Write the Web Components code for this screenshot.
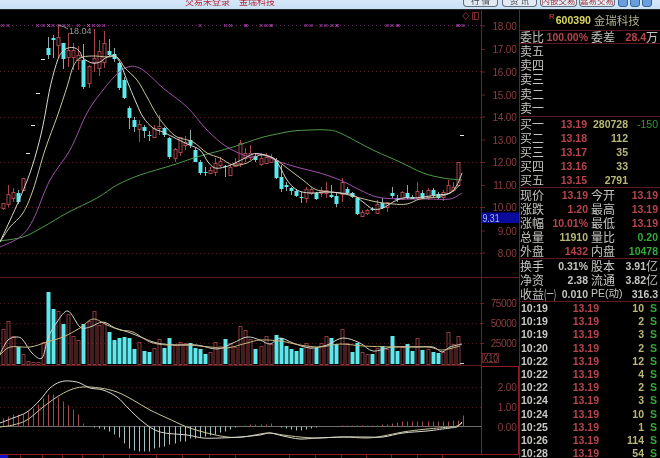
<!DOCTYPE html>
<html lang="zh">
<head>
<meta charset="utf-8">
<title>金瑞科技 K线</title>
<style>
  html, body { margin: 0; height: 100%; background: #000; overflow: hidden; }
</style>
</head>
<body>
<terminal-view>
  <top-bar slot="top"></top-bar>
  <kline-chart slot="chart"></kline-chart>
  <quote-panel slot="side">
    <quote-section h="20"><stock-title code="600390">金瑞科技</stock-title></quote-section>
    <quote-section h="12">
      <quote-row label="委比" value="100.00%" tone="red" label2="委差" value2="28.4" tone2="red" unit2="万"></quote-row>
    </quote-section>
    <quote-section h="72" rows="5">
      <book-row label="卖五"></book-row>
      <book-row label="卖四"></book-row>
      <book-row label="卖三"></book-row>
      <book-row label="卖二"></book-row>
      <book-row label="卖一"></book-row>
    </quote-section>
    <quote-section h="70" rows="5">
      <book-row label="买一" price="13.19" vol="280728" diff="-150"></book-row>
      <book-row label="买二" price="13.18" vol="112"></book-row>
      <book-row label="买三" price="13.17" vol="35"></book-row>
      <book-row label="买四" price="13.16" vol="33"></book-row>
      <book-row label="买五" price="13.15" vol="2791"></book-row>
    </quote-section>
    <quote-section h="70" rows="5">
      <quote-row label="现价" value="13.19" tone="red" label2="今开" value2="13.19" tone2="red"></quote-row>
      <quote-row label="涨跌" value="1.20" tone="red" label2="最高" value2="13.19" tone2="red"></quote-row>
      <quote-row label="涨幅" value="10.01%" tone="red" label2="最低" value2="13.19" tone2="red"></quote-row>
      <quote-row label="总量" value="11910" tone="yellow" label2="量比" value2="0.20" tone2="green"></quote-row>
      <quote-row label="外盘" value="1432" tone="red" label2="内盘" value2="10478" tone2="green"></quote-row>
    </quote-section>
    <quote-section h="42" rows="3">
      <quote-row label="换手" value="0.31%" tone="grey" label2="股本" value2="3.91" tone2="grey" unit2="亿"></quote-row>
      <quote-row label="净资" value="2.38" tone="grey" label2="流通" value2="3.82" tone2="grey" unit2="亿"></quote-row>
      <quote-row label="收益" suffix="(一)" value="0.010" tone="grey" label2="PE(动)" value2="316.3" tone2="grey"></quote-row>
    </quote-section>
    <quote-section h="160" rows="12" step="13.2">
      <trade-row time="10:19" price="13.19" vol="10"></trade-row>
      <trade-row time="10:19" price="13.19" vol="2"></trade-row>
      <trade-row time="10:19" price="13.19" vol="3"></trade-row>
      <trade-row time="10:20" price="13.19" vol="2"></trade-row>
      <trade-row time="10:22" price="13.19" vol="12"></trade-row>
      <trade-row time="10:22" price="13.19" vol="4"></trade-row>
      <trade-row time="10:22" price="13.19" vol="2"></trade-row>
      <trade-row time="10:24" price="13.19" vol="3"></trade-row>
      <trade-row time="10:24" price="13.19" vol="10"></trade-row>
      <trade-row time="10:25" price="13.19" vol="1"></trade-row>
      <trade-row time="10:26" price="13.19" vol="114"></trade-row>
      <trade-row time="10:28" price="13.19" vol="54"></trade-row>
    </quote-section>
  </quote-panel>
</terminal-view>

<script>
const TONES = { red: '#b8454c', yellow: '#b9b878', green: '#35a83a', grey: '#c4c4c0' };
const LINE = '#5e1a1e';
const CJK = '"Noto Sans CJK SC", "Liberation Sans", sans-serif';
const NUM = '"Liberation Sans", "Noto Sans CJK SC", sans-serif';

class TerminalView extends HTMLElement {
  constructor() {
    super();
    this.attachShadow({ mode: 'open' });
  }
  connectedCallback() {
    this.shadowRoot.innerHTML = `
      <style>
        :host { display: flex; flex-direction: column; width: 660px; height: 458px; background: #000; filter: blur(.4px); overflow: hidden; }
        #main { display: flex; flex: 1; min-height: 0; }
      </style>
      <slot name="top"></slot>
      <div id="main">
        <slot name="chart"></slot>
        <slot name="side"></slot>
      </div>`;
  }
}

class TopBar extends HTMLElement {
  constructor() {
    super();
    this.attachShadow({ mode: 'open' });
  }
  connectedCallback() {
    this.shadowRoot.innerHTML = `
      <style>
        :host { display: flex; height: 9px; flex-shrink: 0; overflow: hidden; background: linear-gradient(#d6e7f8, #c8e0f6); border-bottom: 1px solid #26282c; align-items: flex-end; font: 9px ${CJK}; }
        #title { margin-left: 185px; width: 278px; margin-bottom: 3px; color: #b8283a; font-size: 9px; line-height: 9px; white-space: nowrap; }
        #title span { margin-left: 9px; }
        #tabs { display: flex; align-items: flex-end; margin-bottom: 2px; }
        .tab { box-sizing: border-box; height: 10px; width: 35px; border: 1px solid #5f6f7f; border-top: 0; border-radius: 0 0 4px 4px; background: #e2ebf3; color: #4a4a50; text-align: center; line-height: 7px; font-size: 8.5px; white-space: nowrap; }
        .tab + .tab { margin-left: 4px; }
        .tab.wide { color: #a33a44; width: 37px; margin-left: 3px; }
        .tab.wide + .wide { width: 36px; margin-left: 2px; }
        #win { display: flex; gap: 2px; margin: 0 0 2px 3px; }
        #win i { display: block; width: 10px; height: 9px; background: #6a9ede; border: 1px solid #36639c; border-radius: 0 0 3px 3px; box-sizing: border-box; }
      </style>
      <div id="title">交易未登录<span>金瑞科技</span></div>
      <div id="tabs">
        <div class="tab">行 情</div>
        <div class="tab">资 讯</div>
        <div class="tab wide">内嵌交易</div>
        <div class="tab wide">嘉易交易</div>
      </div>
      <div id="win"><i></i><i></i><i></i></div>`;
  }
}

// x of candle number i on the price canvas
const cx = i => 2.5 + 5.06 * i;

// [bodyTop, bodyBottom, wickTop, wickBottom, cyan?]
const CANDLES = [
  [203,208,203,210,0],[194,204,185,207,0],[192,198,188,202,0],[193,202,190,204,1],[178,190,178,190,0],
  [153,154,153,154,2],[125,126,125,126,2],[93,94,93,94,2],[59,60,59,60,2],
  [48,55,37,59,1],[38,40,35,58,1],[37,45,25,58,0],[43,59,43,69,1],[50,57,33,67,0],[50,57,43,70,0],
  [55,60,46,70,0],[60,87,44,89,1],[66,83,65,88,0],[58,62,29,72,0],[51,68,40,76,0],[43,62,31,68,0],
  [51,55,39,56,1],[54,59,48,62,1],[63,88,62,90,1],[80,98,77,99,1],[108,118,106,129,1],[120,127,117,132,1],
  [124,129,120,142,0],[127,131,125,138,1],[135,136,131,141,1],[128,137,125,137,0],[126,128,115,135,0],
  [128,135,127,137,1],[138,157,137,159,1],[149,158,148,162,0],[137,152,137,156,0],[142,145,136,150,0],
  [140,145,130,148,1],[150,162,148,162,1],[162,173,160,175,1],[172,173,167,176,1],[170,173,167,174,0],
  [163,172,158,176,0],[161,165,157,167,0],[166,167,165,177,1],[167,175,165,176,0],[163,166,158,167,0],
  [143,163,140,167,0],[153,158,148,162,0],[153,157,145,160,0],[156,160,153,162,1],[158,164,153,166,0],
  [157,163,153,164,0],[157,162,154,163,0],[160,178,158,179,1],[177,189,165,192,1],[185,187,182,191,1],
  [188,191,187,195,1],[191,196,189,197,1],[197,198,192,203,1],[189,198,187,203,0],[189,193,187,195,0],
  [193,199,192,200,1],[190,193,187,197,0],[190,193,182,198,0],[195,197,185,198,1],[196,204,193,207,1],
  [182,194,178,202,0],[189,193,187,195,1],[193,197,192,198,1],[198,214,197,215,1],[212,216,210,217,0],
  [210,213,209,215,0],[209,210,207,211,1],[204,213,200,214,0],[203,208,198,209,1],[202,207,202,212,0],
  [193,196,187,198,1],[198,200,195,202,1],[192,199,191,200,0],[193,198,185,199,1],[197,199,195,199,1],
  [191,198,182,200,0],[193,198,190,199,1],[190,197,188,200,0],[190,195,188,197,1],[194,198,192,199,1],
  [192,197,190,201,0],[185,193,180,194,0],[187,190,182,192,0],[162,185,162,185,0]
];

const VOLS = [
  [329,0],[321,0],[336,0],[347,1],[354,0],[361,0],[362,0],[362,0],[342,0],[292,1],[309,1],[311,0],[324,1],[314,0],
  [336,0],[340,0],[324,1],[321,0],[311,0],[325,0],[323,0],[332,1],[340,1],[338,1],[337,1],[338,1],[349,1],[342,0],
  [351,1],[352,1],[348,0],[339,0],[348,1],[338,1],[345,0],[342,0],[343,0],[343,1],[348,1],[349,1],[354,1],[352,0],
  [342,0],[346,0],[339,1],[343,0],[347,0],[326,0],[330,0],[339,0],[349,1],[346,0],[336,0],[344,0],[335,1],[338,1],
  [346,1],[349,1],[351,1],[348,1],[343,0],[348,0],[348,1],[343,0],[336,0],[338,1],[344,1],[329,0],[343,0],[352,1],
  [343,1],[352,0],[354,0],[354,1],[348,0],[346,1],[349,0],[336,1],[351,1],[347,0],[344,1],[351,1],[338,0],[350,1],
  [349,0],[352,1],[353,1],[352,0],[332,0],[344,0],[336,0]
];

const MACD = [8,10,12,12,12,15,18,22,28,32,32,29,25,21,17,12,3,0,-1,-2,-3,-5,-8,-11,-17,-22,-24,-25,-25,-25,-22,-21,-20,-18,-17,-15,-15,-12,-12,-11,-10,-9,-8,-6,-5,-3,-1,0,1,2,2,2,2,3,0,-1,-2,-3,-4,-4,-3,-2,-1,0,0,0,0,1,1,1,1,1,1,1,1,2,2,3,4,5,5,5,5,5,5,5,5,5,5,6,6,11];

const MA5 = [[0,242],[20,198],[32,167],[42,130],[50,88],[57,62],[62,52],[68,48],[75,48],[80,52],[83,58],[92,63],[100,62],[107,57],[115,56],[120,63],[128,83],[135,100],[143,117],[153,128],[163,132],[173,137],[187,144],[200,150],[208,162],[215,168],[225,167],[235,163],[245,158],[253,154],[260,154],[273,158],[280,167],[287,180],[297,190],[310,193],[327,192],[340,193],[353,195],[363,202],[373,209],[383,208],[393,202],[403,198],[413,198],[423,197],[437,195],[450,193],[457,185],[462,173]];
const MA10 = [[0,242],[10,227],[23,213],[33,190],[45,150],[57,117],[67,87],[73,67],[80,58],[92,56],[107,57],[117,57],[125,68],[137,80],[147,97],[157,115],[167,128],[177,137],[193,142],[207,153],[220,158],[233,165],[247,163],[260,155],[273,158],[287,168],[303,180],[317,190],[340,193],[360,198],[377,202],[393,204],[407,204],[420,199],[437,197],[450,193],[460,185]];
const MA20 = [[0,247],[20,237],[33,220],[50,180],[70,150],[87,113],[103,90],[118,73],[128,67],[137,67],[147,73],[163,88],[187,107],[207,130],[227,147],[250,157],[260,154],[280,162],[300,168],[320,173],[340,180],[360,190],[377,197],[400,199],[427,199],[450,199],[462,193]];
const MA60 = [[0,241],[23,237],[43,227],[67,213],[97,198],[117,185],[140,175],[173,165],[197,157],[233,147],[260,138],[277,134],[293,131],[310,130],[327,130],[340,133],[373,150],[400,162],[423,173],[443,178],[462,180]];
const VOL_A = [[0,354],[8,340],[17,337],[23,340],[32,353],[42,358],[48,338],[57,322],[68,311],[80,327],[90,327],[103,322],[115,328],[128,332],[143,338],[157,343],[177,345],[197,345],[217,349],[233,343],[247,337],[260,340],[270,344],[280,338],[293,343],[310,348],[327,345],[343,338],[360,343],[373,351],[393,347],[417,347],[433,347],[442,352],[450,347],[462,344]];
const VOL_B = [[0,355],[10,347],[30,347],[47,342],[63,337],[80,328],[93,319],[107,325],[120,330],[133,332],[150,342],[167,345],[187,345],[210,347],[227,348],[247,343],[260,340],[280,341],[300,345],[320,347],[340,344],[363,346],[393,347],[427,347],[442,350],[460,346]];
const DIF = [[0,423],[13,418],[27,412],[40,400],[50,388],[60,382],[70,381],[80,383],[90,388],[103,390],[117,397],[128,408],[143,422],[160,432],[187,435],[203,438],[220,438],[240,437],[260,435],[270,433],[283,436],[300,439],[317,438],[343,437],[367,437],[383,437],[403,433],[427,431],[450,428],[457,427],[462,422]];
const DEA = [[0,427],[13,425],[27,420],[43,407],[57,397],[70,390],[83,387],[100,388],[117,392],[133,400],[150,410],[167,418],[187,427],[207,433],[227,437],[243,437],[260,434],[270,433],[283,435],[300,437],[317,438],[343,437],[367,438],[383,436],[403,432],[427,429],[450,427],[457,426],[462,423]];

const MARKS = [2.7,8,37.7,43,48.7,53,59,64,68.7,78.3,88.7,93.7,98.7,103.7,200,225.7,230.7,246,261,266,271,306,311,321,326,332,337,387,392,398,458,463];
const BRIGHT = [48.7,88.7,246,271,337,398,458];

// catmull-rom through the read-off points
function smooth(pts) {
  let d = `M${pts[0][0]} ${pts[0][1]}`;
  for (let i = 0; i < pts.length - 1; i++) {
    const p0 = pts[i - 1] || pts[i], p1 = pts[i], p2 = pts[i + 1], p3 = pts[i + 2] || p2;
    const c1x = p1[0] + (p2[0] - p0[0]) / 6, c1y = p1[1] + (p2[1] - p0[1]) / 6;
    const c2x = p2[0] - (p3[0] - p1[0]) / 6, c2y = p2[1] - (p3[1] - p1[1]) / 6;
    d += `C${c1x.toFixed(1)} ${c1y.toFixed(1)} ${c2x.toFixed(1)} ${c2y.toFixed(1)} ${p2[0]} ${p2[1]}`;
  }
  return d;
}

class KlineChart extends HTMLElement {
  constructor() {
    super();
    this.attachShadow({ mode: 'open' });
  }
  connectedCallback() {
    const UP = '#a8454a', DOWN = '#5fe8ec';
    const curve = (pts, c, w = 1) => `<path d="${smooth(pts)}" fill="none" stroke="${c}" stroke-width="${w}"/>`;
    const dots = (y, c = '#5a2226') => `<line x1="0" y1="${y}" x2="481" y2="${y}" stroke="${c}" stroke-dasharray="1 3"/>`;
    const label = (t, x, y, extra = '') => `<text x="${x}" y="${y}" ${extra}>${t}</text>`;

    let s = '';
    // grid
    [71.5, 117.5, 162.5, 207.5, 253.5].forEach(y => s += dots(y));
    s += dots(25.5, '#6a2a6a');
    [303.5, 323.5, 343.5, 387.5, 407.5].forEach(y => s += dots(y, '#4a1c20'));

    // markers
    MARKS.forEach(x => {
      const c = BRIGHT.includes(x) ? '#e050e0' : '#a838a8';
      s += `<path d="M${x - 1.5} 24L${x + 1.5} 27M${x + 1.5} 24L${x - 1.5} 27" stroke="${c}" fill="none"/>`;
    });

    // candles
    CANDLES.forEach((c, i) => {
      const x = Math.round(cx(i));
      if (c[4] === 2) { s += `<rect x="${x - 2}" y="${c[0]}" width="4" height="1" fill="#e8e8e0"/>`; return; }
      const col = c[4] ? DOWN : UP;
      s += `<line x1="${x + .5}" y1="${c[2]}" x2="${x + .5}" y2="${c[3]}" stroke="${c[4] ? '#8fa8a8' : UP}"/>`;
      if (c[4]) s += `<rect x="${x - 1.5}" y="${c[0]}" width="4" height="${c[1] - c[0]}" fill="${col}"/>`;
      else s += `<rect x="${x - 1}" y="${c[0] + .5}" width="3" height="${c[1] - c[0]}" fill="#000" stroke="${col}"/>`;
    });
    s += `<rect x="460" y="135" width="4" height="1" fill="#e8e8e0"/>`;

    // MA lines
    s += curve(MA60, '#4f9a4c') + curve(MA20, '#a050a8') + curve(MA10, '#c8c498') + curve(MA5, '#d8d8d0');

    s += `<path d="M58 25Q64 26 68 29" fill="none" stroke="#909090"/>`;
    s += label('18.04', 69, 34, 'fill="#9a9a9a" font-size="9"');

    // volume
    VOLS.forEach((v, i) => {
      const x = Math.round(cx(i));
      if (v[1]) s += `<rect x="${x - 1.5}" y="${v[0]}" width="4" height="${364 - v[0]}" fill="${DOWN}"/>`;
      else s += `<rect x="${x - 1}" y="${v[0] + .5}" width="3" height="${364 - v[0]}" fill="none" stroke="#8c3a3e"/>`;
    });
    s += `<rect x="460" y="363" width="4" height="1" fill="#d0d0d0"/>`;
    s += curve(VOL_A, '#d0d0c8') + curve(VOL_B, '#c8b880');

    // macd
    s += `<line x1="0" y1="426.5" x2="481" y2="426.5" stroke="#6e6e6e"/>`;
    MACD.forEach((h, i) => {
      const x = Math.round(cx(i)) + .5;
      if (!h) return;
      s += `<line x1="${x}" y1="426.5" x2="${x}" y2="${426.5 - h}" stroke="${h > 0 ? '#a04a4a' : '#9ec4c4'}"/>`;
    });
    s += curve(DEA, '#c8c498') + curve(DIF, '#d8d8d0');

    // panel rules
    s += `<line x1="0" y1="277.5" x2="519" y2="277.5" stroke="${LINE}"/>`;
    s += `<line x1="0" y1="365.5" x2="481" y2="365.5" stroke="${LINE}"/>`;
    s += `<line x1="0" y1="454.5" x2="481" y2="454.5" stroke="#8e1c22"/>`;
    s += `<line x1="481.5" y1="10" x2="481.5" y2="367" stroke="#6b2226"/>`;
    s += `<rect x="481.5" y="366.5" width="37" height="88" fill="none" stroke="#8e1c22"/>`;
    s += `<rect x="0" y="455" width="8" height="3" fill="#1010c8"/>`;
    [20,42,62,82,103,129,156,182,209,235,289,315,341,366,391,417,442].forEach(x =>
      s += `<line x1="${x}.5" y1="455" x2="${x}.5" y2="458" stroke="#6b2226"/>`);

    // axis
    const axis = [['18.00',26],['17.00',49.5],['16.00',72],['15.00',95],['14.00',117],['13.00',140],['12.00',162.5],['11.00',185.5],['10.00',207.5],['9.00',231],['8.00',253]];
    axis.forEach(([t, y]) => {
      s += `<line x1="481" y1="${y}" x2="485" y2="${y}" stroke="#6b2226"/>`;
      s += label(t, 516.5, y + 3.5, 'class="ax"');
    });
    [[75000,303.5],[50000,323.5],[25000,343.5]].forEach(([t, y]) => {
      s += `<line x1="481" y1="${y}" x2="484" y2="${y}" stroke="#6b2226"/>`;
      s += label(t, 516.5, y + 3.5, 'class="ax" style="letter-spacing:-.4px"');
    });
    [['2.00',387],['1.00',407],['0.00',427]].forEach(([t, y]) => s += label(t, 516.5, y + 3.5, 'class="ax"'));

    // latest price tag and X10 box
    s += `<rect x="482" y="212.5" width="37" height="10.5" fill="#0a0a9c"/>`;
    s += label('9.31', 482.5, 221.5, 'fill="#a8b8e8" font-size="10.5" textLength="17" lengthAdjust="spacingAndGlyphs"');
    s += `<rect x="482.5" y="353.5" width="16" height="9" fill="none" stroke="#6b2226"/>`;
    s += label('X10', 483, 362, 'fill="#8c4a4a" font-size="10" textLength="15" lengthAdjust="spacingAndGlyphs"');

    // icons top right
    s += `<path d="M465.7 12.5L468.7 16L465.7 19.5L462.7 16Z" fill="none" stroke="#7a2e30"/>`;
    s += `<path d="M472.5 12.5H478.5V19.5H472.5ZM474.5 12.5V19.5" fill="none" stroke="#7a2e30"/>`;

    this.shadowRoot.innerHTML = `
      <style>
        :host { display: block; width: 519px; height: 448px; flex-shrink: 0; }
        svg { display: block; font-family: ${NUM}; }
        .ax { fill: #8c3e40; font-size: 10px; text-anchor: end; letter-spacing: -.2px; }
      </style>
      <svg width="519" height="448" viewBox="0 10 519 448">${s}</svg>`;
  }
}

class QuotePanel extends HTMLElement {
  constructor() {
    super();
    this.attachShadow({ mode: 'open' });
  }
  connectedCallback() {
    this.shadowRoot.innerHTML = `
      <style>
        :host { display: flex; flex-direction: column; box-sizing: border-box; width: 141px; height: 448px; overflow: hidden; border-left: 1px solid #6b2226; background: #000; }
      </style>
      <slot></slot>`;
  }
}

class QuoteSection extends HTMLElement {
  constructor() {
    super();
    this.attachShadow({ mode: 'open' });
  }
  connectedCallback() {
    const h = this.getAttribute('h');
    const rows = this.getAttribute('rows');
    const step = this.getAttribute('step');
    this.shadowRoot.innerHTML = `
      <style>
        :host { display: grid; flex: none; height: ${h}px; border-bottom: 1px solid ${LINE}; align-items: center; ${rows ? `grid-template-rows: repeat(${rows}, ${step ? step + 'px' : '1fr'});` : ''} }
      </style>
      <slot></slot>`;
  }
}

class StockTitle extends HTMLElement {
  constructor() {
    super();
    this.attachShadow({ mode: 'open' });
  }
  connectedCallback() {
    this.shadowRoot.innerHTML = `
      <style>
        :host { display: flex; align-items: center; padding-left: 29px; height: 100%; }
        sup { color: #e04a4a; font: 8px ${NUM}; margin-top: -7px; margin-right: 1px; }
        b { color: #dada60; font: bold 10.5px ${NUM}; margin-right: 3px; }
        span { color: #b0b08c; font: 11.5px ${CJK}; }
      </style>
      <sup>R</sup><b>${this.getAttribute('code')}</b><span><slot></slot></span>`;
  }
}

const cellCss = `
  :host { display: grid; align-items: center; height: 100%; line-height: 13px; white-space: nowrap; }
  .lb { color: #c4c4c0; font: 12px/11px ${CJK}; padding-bottom: 2px; }
  .v { font: bold 10.5px/13px ${NUM}; text-align: right; }
  .u { font: 12px/11px ${CJK}; color: #c4c4c0; padding-bottom: 2px; }
`;

class QuoteRow extends HTMLElement {
  constructor() {
    super();
    this.attachShadow({ mode: 'open' });
  }
  connectedCallback() {
    const a = n => this.getAttribute(n) || '';
    const unit = a('unit2');
    const wide = !!a('suffix');
    this.shadowRoot.innerHTML = `
      <style>
        ${cellCss}
        :host { grid-template-columns: ${wide ? '36px 32px 3px 32px 36px' : '25px 43px 3px 25px 43px'}; }
        .lb.small { font: 10.5px/11px ${NUM}; }
        .s { display: inline-block; width: 12px; transform: scaleX(.6); transform-origin: left; }
        .wrap { display: flex; justify-content: flex-end; align-items: center; padding-right: 1px; }
      </style>
      <div class="lb">${a('label')}${wide ? `<span class="s">${a('suffix')}</span>` : ''}</div>
      <div class="v" style="color:${TONES[a('tone')]}">${a('value')}</div>
      <div></div>
      <div class="lb ${wide ? 'small' : ''}">${a('label2')}</div>
      <div class="wrap"><span class="v" style="color:${TONES[a('tone2')]}">${a('value2')}</span>${unit ? `<span class="u">${unit}</span>` : ''}</div>`;
  }
}

class BookRow extends HTMLElement {
  constructor() {
    super();
    this.attachShadow({ mode: 'open' });
  }
  connectedCallback() {
    const a = n => this.getAttribute(n) || '';
    this.shadowRoot.innerHTML = `
      <style>
        ${cellCss}
        :host { grid-template-columns: 25px 42px 41px 30px; }
        .d { color: #2f9a3a; font: 10.5px/13px ${NUM}; text-align: right; }
      </style>
      <div class="lb">${a('label')}</div>
      <div class="v" style="color:${TONES.red}">${a('price')}</div>
      <div class="v" style="color:${TONES.yellow}">${a('vol')}</div>
      <div class="d">${a('diff')}</div>`;
  }
}

class TradeRow extends HTMLElement {
  constructor() {
    super();
    this.attachShadow({ mode: 'open' });
  }
  connectedCallback() {
    const a = n => this.getAttribute(n) || '';
    this.shadowRoot.innerHTML = `
      <style>
        ${cellCss}
        :host { grid-template-columns: 30px 48px 45px 13px; padding-left: 1px; }
        .t { color: #c8c8c4; font: bold 10.5px/13px ${NUM}; }
        .s { color: #35a83a; font: bold 10.5px/13px ${NUM}; text-align: right; }
      </style>
      <div class="t">${a('time')}</div>
      <div class="v" style="color:${TONES.red}">${a('price')}</div>
      <div class="v" style="color:${TONES.yellow}">${a('vol')}</div>
      <div class="s">S</div>`;
  }
}

customElements.define('terminal-view', TerminalView);
customElements.define('top-bar', TopBar);
customElements.define('kline-chart', KlineChart);
customElements.define('quote-panel', QuotePanel);
customElements.define('quote-section', QuoteSection);
customElements.define('stock-title', StockTitle);
customElements.define('quote-row', QuoteRow);
customElements.define('book-row', BookRow);
customElements.define('trade-row', TradeRow);
</script>
</body>
</html>
